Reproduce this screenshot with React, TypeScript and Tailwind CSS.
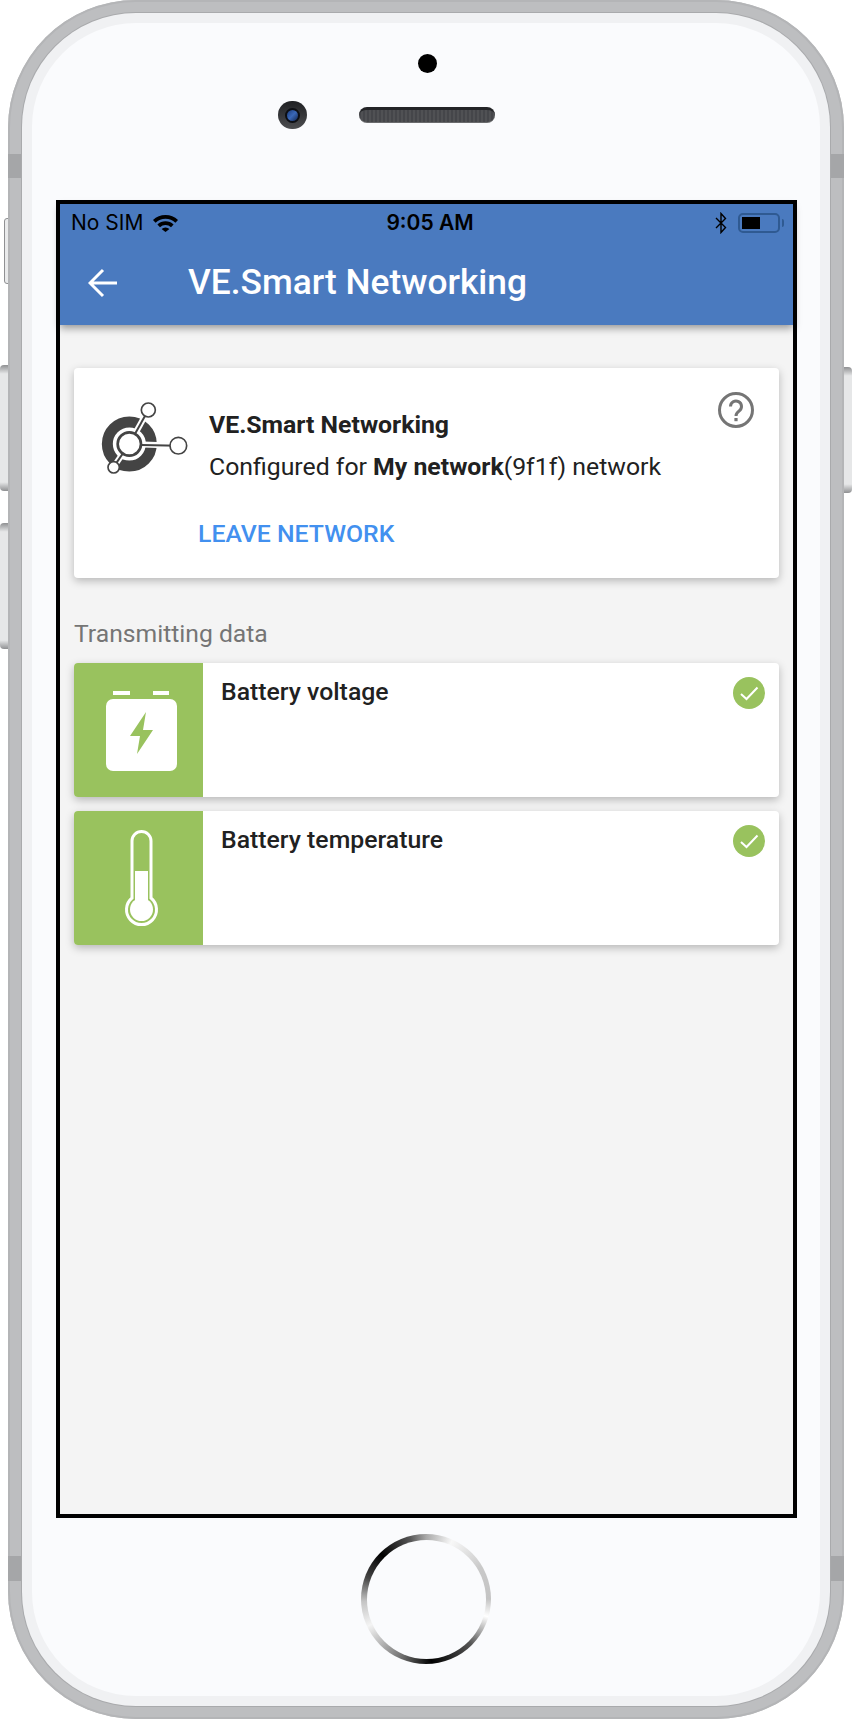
import React from "react";

const roboto = "font-[Roboto,sans-serif]";

function NetworkIcon() {
  return (
    <svg viewBox="120 120 270 225" className="w-[90px] h-[75px] flex-none">
      <circle cx="208" cy="252" r="66" fill="none" stroke="#444444" strokeWidth="33" />
      <g stroke="#ffffff" strokeWidth="18">
        <path d="M208 252 L265 150" />
        <path d="M208 252 L355 257" />
        <path d="M208 252 L160 322" />
      </g>
      <g stroke="#444444" strokeWidth="6">
        <path d="M208 252 L265 150" />
        <path d="M208 254 L355 257" />
        <path d="M208 252 L160 322" />
      </g>
      <circle cx="208" cy="252" r="35" fill="#ffffff" stroke="#444444" strokeWidth="8" />
      <circle cx="265" cy="150" r="21" fill="#ffffff" stroke="#444444" strokeWidth="5" />
      <circle cx="355" cy="257" r="25" fill="#ffffff" stroke="#444444" strokeWidth="5" />
      <circle cx="161" cy="322" r="17" fill="#ffffff" stroke="#444444" strokeWidth="5" />
    </svg>
  );
}

function BatteryIcon() {
  return (
    <svg viewBox="0 0 129 134" className="w-[129px] h-[134px]">
      <rect x="32" y="36" width="71" height="72" rx="7" fill="#ffffff" />
      <rect x="39" y="28" width="17" height="4" fill="#ffffff" />
      <rect x="79" y="28" width="16" height="4" fill="#ffffff" />
      <path d="M72 49 L56 73 L66 73 L63 91 L79 67 L69 67 Z" fill="#99c25e" />
    </svg>
  );
}

function ThermometerIcon() {
  return (
    <svg viewBox="0 0 129 134" className="w-[129px] h-[134px]">
      <path
        d="M58 87 V30 a9.5 9.5 0 0 1 19 0 V87 A15 15 0 1 1 58 87 Z"
        fill="none"
        stroke="#ffffff"
        strokeWidth="3"
      />
      <rect x="61" y="60" width="13" height="34" fill="#ffffff" />
      <circle cx="67.5" cy="98.5" r="11.5" fill="#ffffff" />
    </svg>
  );
}

function CheckBadge() {
  return (
    <svg viewBox="0 0 32 32" className="w-8 h-8 flex-none">
      <circle cx="16" cy="16" r="16" fill="#99c25e" />
      <path d="M8 17 L13.5 22 L24.5 10.5" fill="none" stroke="#ffffff" strokeWidth="2" />
    </svg>
  );
}

function DataRow({ title, icon }: { title: string; icon: React.ReactNode }) {
  return (
    <div className="flex h-[134px] bg-white rounded-[4px] overflow-hidden shadow-[0_3px_8px_rgba(0,0,0,0.25)]">
      <div className="w-[129px] flex-none bg-[#99c25e]">{icon}</div>
      <div className={`flex-1 pl-[18px] pt-[14px] text-[24.8px] leading-[30px] font-medium text-[#212121] ${roboto}`}>
        {title}
      </div>
      <div className="mr-[14px] mt-[14px]">
        <CheckBadge />
      </div>
    </div>
  );
}

function StatusBar() {
  return (
    <div className="flex items-center justify-between h-[36px] pl-[11px] pr-[9px] pt-[2px] font-[Inter,sans-serif] text-[21px] text-black">
      <div className="flex items-center w-[250px]">
        <span>No SIM</span>
        <svg viewBox="0 0 25 18" className="w-[25px] h-[18px] ml-[10px]">
          <path d="M0 6 A18 18 0 0 1 25 6 L22.4 8.8 A14.4 14.4 0 0 0 2.6 8.8 Z" fill="#000000" />
          <path d="M4.4 10.6 A11.6 11.6 0 0 1 20.6 10.6 L18 13.2 A8 8 0 0 0 7 13.2 Z" fill="#000000" />
          <path d="M8.6 15 A5.5 5.5 0 0 1 16.4 15 L12.5 18 Z" fill="#000000" />
        </svg>
      </div>
      <span className="font-semibold pl-[5px]">9:05 AM</span>
      <div className="flex items-center justify-end w-[250px]">
        <svg viewBox="0 0 12 22" className="w-[12px] h-[22px]">
          <path d="M1 6 L10.5 15.5 L6 20.5 V1.5 L10.5 6.5 L1 16" fill="none" stroke="#000000" strokeWidth="1.4" />
        </svg>
        <div className="ml-[11px] w-[42px] h-[20px] rounded-[5px] border-2 border-[#2f5a92] p-[2px]">
          <div className="w-[18px] h-full bg-black" />
        </div>
        <div className="ml-[2px] w-[2px] h-[8px] rounded-r-[2px] bg-[#2f5a92]" />
      </div>
    </div>
  );
}

function Screen() {
  return (
    <div className="ml-[24px] w-[741px] h-[1318px] mt-[71px] border-4 border-black bg-[#f4f4f4] flex flex-col flex-none">
      <div className="h-[121px] bg-[#4a7abf] shadow-[0_3px_8px_rgba(0,0,0,0.4)] flex-none">
        <StatusBar />
        <div className="flex items-center h-[85px] pl-[28px]">
          <svg viewBox="0 0 30 30" className="w-[30px] h-[30px]">
            <path d="M29 15 H2 M15 2 L2 15 L15 28" fill="none" stroke="#ffffff" strokeWidth="3" />
          </svg>
          <span className={`ml-[70px] text-[35.3px] font-medium text-white ${roboto}`}>VE.Smart Networking</span>
        </div>
      </div>

      <div className="flex flex-col px-[14px] pt-[43px]">
        <div className="h-[210px] bg-white rounded-[4px] shadow-[0_3px_8px_rgba(0,0,0,0.25)] flex flex-col">
          <div className="flex pt-[24px] pl-[26px] pr-[25px]">
            <div className="mt-[8px]">
              <NetworkIcon />
            </div>
            <div className={`ml-[19px] pt-[18px] text-[#212121] leading-[30px] ${roboto}`}>
              <div className="text-[24.8px] font-bold">VE.Smart Networking</div>
              <div className="mt-[12px] text-[24.8px]">
                Configured for <b>My network</b>(9f1f) network
              </div>
            </div>
            <svg viewBox="0 0 36 36" className="w-9 h-9 ml-auto flex-none">
              <circle cx="18" cy="18" r="16.5" fill="none" stroke="#757575" strokeWidth="3" />
              <path d="M12.5 14.5a5.5 5.5 0 1 1 8.6 4.5c-2 1.4-3.1 2.4-3.1 5" fill="none" stroke="#757575" strokeWidth="3" />
              <rect x="16.4" y="26" width="3.2" height="3.2" fill="#757575" />
            </svg>
          </div>
          <div className={`pl-[124px] mt-[37px] text-[24.8px] leading-[30px] font-medium text-[#4290ef] ${roboto}`}>
            LEAVE NETWORK
          </div>
        </div>

        <div className={`h-[85px] pt-[41px] text-[24.7px] leading-[30px] text-[#757575] ${roboto}`}>Transmitting data</div>

        <div className="flex flex-col gap-[14px]">
          <DataRow title="Battery voltage" icon={<BatteryIcon />} />
          <DataRow title="Battery temperature" icon={<ThermometerIcon />} />
        </div>
      </div>
    </div>
  );
}

export default function App() {
  return (
    <div className="relative w-[852px] h-[1719px] bg-white overflow-hidden">
      {/* side buttons */}
      <div className="absolute left-[4px] top-[218px] w-[6px] h-[66px] rounded-l-[3px] bg-[#e9eaeb] border border-[#8f9092]" />
      <div className="absolute left-0 top-[365px] w-[9px] h-[126px] rounded-l-[4px] bg-[linear-gradient(#8f9092,#e6e7e8_7%,#e6e7e8_93%,#8f9092)]" />
      <div className="absolute left-0 top-[523px] w-[9px] h-[126px] rounded-l-[4px] bg-[linear-gradient(#8f9092,#e6e7e8_7%,#e6e7e8_93%,#8f9092)]" />
      <div className="absolute left-[843px] top-[367px] w-[9px] h-[126px] rounded-r-[4px] bg-[linear-gradient(#8f9092,#e6e7e8_7%,#e6e7e8_93%,#8f9092)]" />

      {/* body */}
      <div className="relative ml-[8px] w-[836px] h-[1719px] rounded-[128px] bg-[#bdbec0] pt-[13px] pb-[13px] px-[14px] shadow-[inset_0_0_0_2px_#b4b5b7]">
        <div className="absolute left-0 top-[154px] w-[14px] h-[24px] bg-[#a5a6a8]" />
        <div className="absolute right-0 top-[154px] w-[14px] h-[24px] bg-[#a5a6a8]" />
        <div className="absolute left-0 top-[1556px] w-[14px] h-[25px] bg-[#a5a6a8]" />
        <div className="absolute right-0 top-[1556px] w-[14px] h-[25px] bg-[#a5a6a8]" />

        <div className="relative h-full rounded-[114px] bg-[#f0f1f3] p-[10px] shadow-[0_0_0_1px_#a9aaac]">
          <div className="h-full rounded-[104px] bg-[#fafbfd] flex flex-col">
            <div className="mt-[31px] ml-[386px] w-[19px] h-[19px] rounded-full bg-black flex-none" />

            <div className="mt-[28px] flex items-center h-[28px] flex-none pl-[246px] gap-[52px]">
              <div className="w-[29px] h-[28px] rounded-full bg-[linear-gradient(#1f2023,#4c4d50)] flex items-center justify-center">
                <div className="w-[15px] h-[15px] rounded-full border-2 border-[#0c0e13] bg-[linear-gradient(135deg,#1b3b7a,#3a68b8,#12264f)]" />
              </div>
              <div className="w-[136px] h-[16px] rounded-full border-t-[3px] border-t-[#232427] border-b border-b-[#6a6b6d] bg-[repeating-linear-gradient(90deg,#45464a_0px,#45464a_2px,#505154_2px,#505154_4px)]" />
            </div>

            <Screen />

            <div className="mt-[16px] ml-[329px] w-[130px] h-[130px] rounded-full flex-none flex items-center justify-center bg-[conic-gradient(#a8a8a8_0deg,#f8f8f8_24deg,#c9c9c9_60deg,#c4c4c4_90deg,#ffffff_106deg,#555555_135deg,#000000_175deg,#777777_205deg,#f4f4f4_245deg,#c4c4c4_268deg,#444444_290deg,#000000_315deg,#555555_345deg,#a8a8a8_360deg)]">
              <div className="w-[119px] h-[119px] rounded-full bg-[#fafbfd]" />
            </div>
          </div>
        </div>
      </div>
    </div>
  );
}
